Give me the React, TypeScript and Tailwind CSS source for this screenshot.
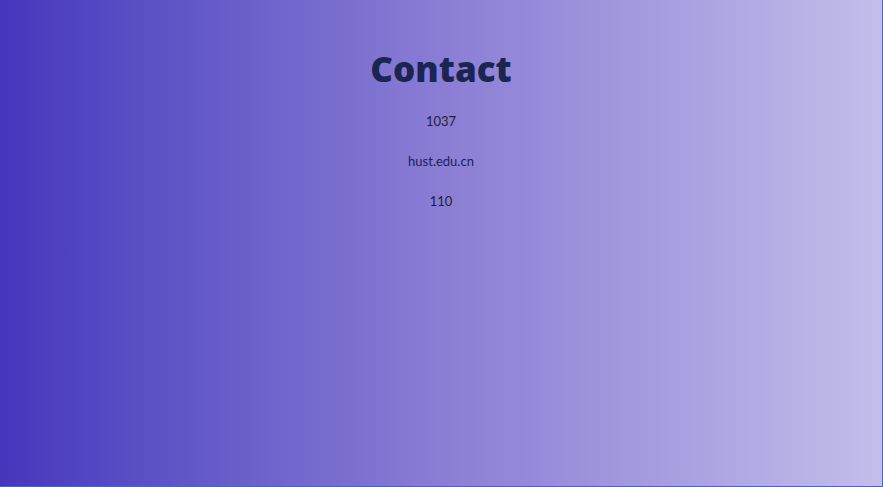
const App = () => {
  return (
    <div className="h-[487px] w-[883px] border-r border-b border-[#4a5cf0] bg-gradient-to-r from-[#4736bc] via-[#8a7dd4] to-[#c3beea] text-center font-['Lato',sans-serif]">
      <h1 className="pt-[45px] text-[35px] leading-[48px] font-extrabold text-[#1b2553] font-['Open_Sans',sans-serif]">
        Contact
      </h1>
      <div className="mt-[19px] flex flex-col items-center gap-[22px] text-[13px] leading-[18px] text-[#1f1f33]">
        <p>1037</p>
        <p className="text-[#1c1f55]">hust.edu.cn</p>
        <p>110</p>
      </div>
    </div>
  );
};

export default App;
